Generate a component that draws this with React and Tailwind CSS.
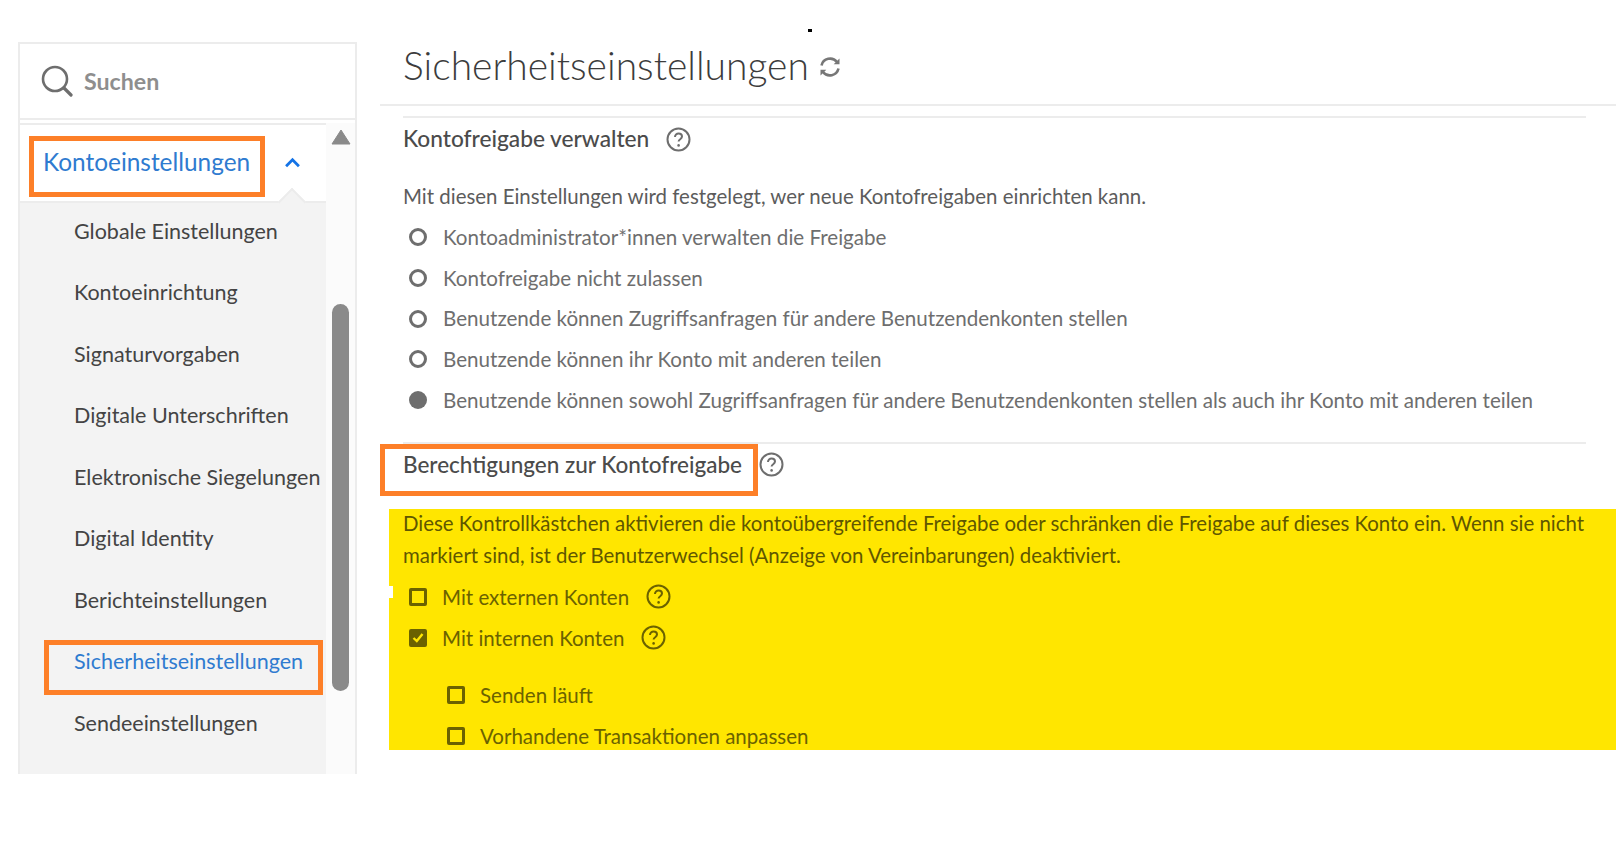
const F = { fontFamily: "Lato, 'Open Sans', sans-serif" };

const Help = ({ className = "", color = "#6e6e6e" }) => (
  <svg viewBox="0 0 25 25" className={`w-[25px] h-[25px] shrink-0 ${className}`} fill="none">
    <circle cx="12.5" cy="12.5" r="11" stroke={color} strokeWidth="2" />
    <path d="M9 10c0-2.2 1.6-3.4 3.6-3.4s3.4 1.2 3.4 3c0 2.6-3.4 2.6-3.4 5" stroke={color} strokeWidth="2" />
    <circle cx="12.6" cy="18.4" r="1.3" fill={color} />
  </svg>
);

const Radio = ({ on, label }) => (
  <div className="h-[40.7px] flex items-center">
    <span className={`ml-[6px] w-[18px] h-[18px] rounded-full ${on ? "bg-[#6e6e6e]" : "border-[3px] border-[#6e6e6e]"}`} />
    <span className="ml-[16px] text-[20.6px] text-[#6e6e6e]">{label}</span>
  </div>
);

const Check = ({ on, label, help, indent }) => (
  <div className={`h-[41px] flex items-center ${indent ? "pl-[58px]" : "pl-[20px]"}`}>
    <span className={`w-[18px] h-[18px] rounded-[2px] border-[3px] border-[#6b6200] flex items-center justify-center ${on ? "bg-[#6b6200]" : ""}`}>
      {on && (
        <svg viewBox="0 0 12 12" className="w-[13px] h-[13px]" fill="none">
          <path d="M1.5 6.5 4.8 9.6 10.5 2.5" stroke="#FFE600" strokeWidth="2.4" />
        </svg>
      )}
    </span>
    <span className="ml-[15px] text-[20.5px] text-[#6b6200]">{label}</span>
    {help && <Help className="ml-[17px]" color="#6b6200" />}
  </div>
);

const items = [
  "Globale Einstellungen",
  "Kontoeinrichtung",
  "Signaturvorgaben",
  "Digitale Unterschriften",
  "Elektronische Siegelungen",
  "Digital Identity",
  "Berichteinstellungen",
  "Sicherheitseinstellungen",
  "Sendeeinstellungen",
];

function Sidebar() {
  return (
    <aside className="relative w-[339px] h-[732px] border-2 border-b-0 border-[#ececec] flex flex-col shrink-0">
      <div className="h-[76px] border-b-2 border-[#ececec] flex items-center pl-[21px]">
        <svg viewBox="0 0 32 32" className="w-[32px] h-[32px]" fill="none">
          <circle cx="14" cy="14" r="12" stroke="#6e6e6e" strokeWidth="2.6" />
          <path d="M23 23l7 7" stroke="#6e6e6e" strokeWidth="3.2" strokeLinecap="round" />
        </svg>
        <span className="ml-[11px] text-[23.2px] font-bold text-[#8e8e8e]">Suchen</span>
      </div>
      <div className="flex-1 flex min-h-0 mt-[3px]">
        <div className="w-[306px] flex flex-col">
          <div className="h-[80px] border-y-2 border-[#ececec] flex items-center relative shrink-0">
            <span className="ml-[23px] -mt-[2px] text-[24.4px] text-[#2f7bd0]">Kontoeinstellungen</span>
            <svg viewBox="0 0 18 12" className="absolute left-[264px] top-[32px] w-[17px] h-[11px]" fill="none">
              <path d="M2 10 9 3l7 7" stroke="#1473e6" strokeWidth="3" />
            </svg>
            <span className="absolute left-[262px] bottom-[-11px] w-[20px] h-[20px] rotate-45 bg-[#f3f3f3] border-l-2 border-t-2 border-[#ececec]" />
          </div>
          <nav className="flex-1 bg-[#f3f3f3] pl-[54px]">
            <div className="-mt-[3px]">
              {items.map((t) => (
                <div
                  key={t}
                  className={`h-[61.5px] flex items-center text-[21.5px] whitespace-nowrap ${
                    t === "Sicherheitseinstellungen" ? "text-[#2f7bd0]" : "text-[#444444]"
                  }`}
                >
                  {t}
                </div>
              ))}
            </div>
          </nav>
        </div>
        <div className="flex-1 bg-[#fbfbfb] pt-[6px] flex flex-col items-center">
          <svg viewBox="0 0 20 16" className="w-[20px] h-[16px]">
            <path d="M10 1 19 15H1Z" fill="#8a8a8a" stroke="#8a8a8a" strokeLinejoin="round" />
          </svg>
          <div className="mt-[159px] w-[17px] h-[387px] rounded-full bg-[#8a8a8a]" />
        </div>
      </div>
    </aside>
  );
}

export default function App() {
  return (
    <div className="relative w-[1616px] h-[854px] bg-white overflow-hidden text-[#444]" style={F}>
      <span className="absolute left-[808px] top-[29px] w-[4px] h-[3px] bg-black" />
      <div className="flex pt-[42px] pl-[18px]">
        <Sidebar />
        <main className="flex-1 ml-[23px] -mt-[42px] min-w-0">
          <div className="h-[106px] pl-[23px] pt-[42px] border-b-2 border-[#ececec] flex items-start">
            <h1 className="text-[39px] leading-[47px] font-light text-[#3c3c3c]">Sicherheitseinstellungen</h1>
            <svg viewBox="0 0 24 24" className="ml-[9px] mt-[13px] w-[24px] h-[24px]" fill="none" stroke="#777" strokeWidth="2.6">
              <path d="M3.5 10.5A8.8 8.8 0 0 1 19 7" />
              <path d="M20.5 13.5A8.8 8.8 0 0 1 5 17" />
              <path d="M21.5 3.5v5.8h-5.8ZM2.5 20.5v-5.8h5.8Z" fill="#777" stroke="none" />
            </svg>
          </div>
          <div className="ml-[23px] mr-[30px] mt-[10px] border-t-2 border-[#ececec]">
            <div className="h-[42px] flex items-center">
              <h2 className="text-[22.7px] font-medium text-[#4b4b4b]">Kontofreigabe verwalten</h2>
              <Help className="ml-[17px]" />
            </div>
            <p className="mt-[23.5px] h-[25px] leading-[25px] text-[20.45px] text-[#5c5c5c] whitespace-nowrap">
              Mit diesen Einstellungen wird festgelegt, wer neue Kontofreigaben einrichten kann.
            </p>
            <div className="mt-[8.5px]">
              <Radio label="Kontoadministrator*innen verwalten die Freigabe" />
              <Radio label="Kontofreigabe nicht zulassen" />
              <Radio label="Benutzende können Zugriffsanfragen für andere Benutzendenkonten stellen" />
              <Radio label="Benutzende können ihr Konto mit anderen teilen" />
              <Radio on label="Benutzende können sowohl Zugriffsanfragen für andere Benutzendenkonten stellen als auch ihr Konto mit anderen teilen" />
            </div>
            <div className="mt-[22px] border-t-2 border-[#ececec] h-[42px] flex items-center">
              <h2 className="text-[22.5px] font-medium text-[#4b4b4b]">Berechtigungen zur Kontofreigabe</h2>
              <Help className="ml-[17px]" />
            </div>
          </div>
          <section className="flow-root relative ml-[9px] mt-[25px] h-[240.5px] bg-[#FFE600] pl-[14px] pr-[20px] text-[#6b6200]">
            <span className="absolute left-0 top-[77px] w-[4px] h-[12px] bg-white" />
            <p className="text-[20.42px] leading-[32px] text-[#5f5700] -mt-[2px]">
              Diese Kontrollkästchen aktivieren die kontoübergreifende Freigabe oder schränken die Freigabe auf dieses Konto ein. Wenn sie nicht markiert sind, ist der Benutzerwechsel (Anzeige von Vereinbarungen) deaktiviert.
            </p>
            <div className="-ml-[14px] mt-[5px]">
              <Check label="Mit externen Konten" help />
              <Check on label="Mit internen Konten" help />
              <div className="h-[16px]" />
              <Check indent label="Senden läuft" />
              <Check indent label="Vorhandene Transaktionen anpassen" />
            </div>
          </section>
        </main>
      </div>
      {/* Orange annotation frames over the page */}
      <span className="absolute left-[29px] top-[136px] w-[236px] h-[61px] border-[5px] border-[#fd7f28]" />
      <span className="absolute left-[44px] top-[640px] w-[279px] h-[55px] border-[5px] border-[#fd7f28]" />
      <span className="absolute left-[380px] top-[444px] w-[378px] h-[52px] border-[5px] border-[#fd7f28]" />
    </div>
  );
}
